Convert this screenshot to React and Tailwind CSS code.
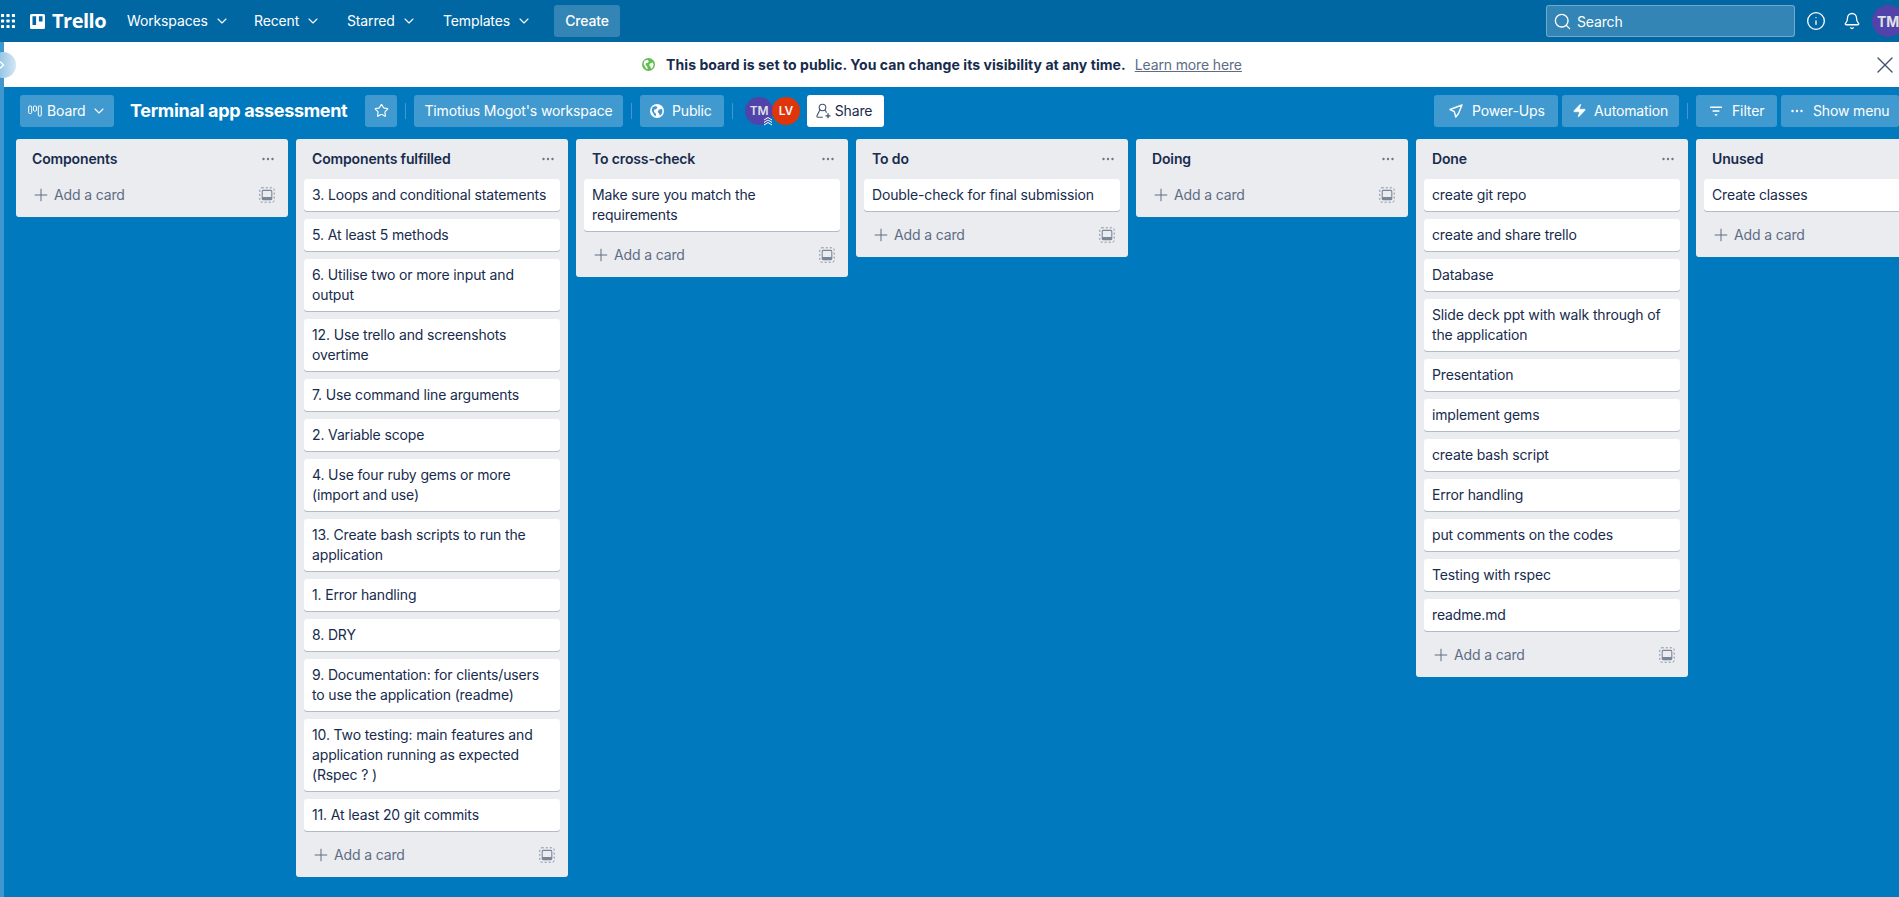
import React from "react";
import { ChevronDown, ChevronRight, Star, Search, Info, Bell, X, Plus, Zap } from "lucide-react";

const lists = [
  { t: "Components", c: [] },
  { t: "Components fulfilled", c: [
    "3. Loops and conditional statements", "5. At least 5 methods", "6. Utilise two or more input and output",
    "12. Use trello and screenshots overtime", "7. Use command line arguments", "2. Variable scope",
    "4. Use four ruby gems or more (import and use)", "13. Create bash scripts to run the application",
    "1. Error handling", "8. DRY", "9. Documentation: for clients/users to use the application (readme)",
    "10. Two testing: main features and application running as expected (Rspec ? )", "11. At least 20 git commits"] },
  { t: "To cross-check", c: ["Make sure you match the requirements"] },
  { t: "To do", c: ["Double-check for final submission"] },
  { t: "Doing", c: [] },
  { t: "Done", c: ["create git repo", "create and share trello", "Database", "Slide deck ppt with walk through of the application",
    "Presentation", "implement gems", "create bash script", "Error handling", "put comments on the codes", "Testing with rspec", "readme.md"] },
  { t: "Unused", c: ["Create classes"] },
];

const Grid = () => (
  <svg width="14" height="14" viewBox="0 0 14 14" fill="white">
    {[1.5, 7, 12.5].flatMap((y) => [1.5, 7, 12.5].map((x) => <rect key={x + "-" + y} x={x - 1.6} y={y - 1.6} width="3.2" height="3.2" rx="0.9" />))}
  </svg>
);
const Logo = () => (
  <svg width="15" height="15" viewBox="0 0 15 15">
    <path fillRule="evenodd" fill="white" d="M1.5 0h12A1.5 1.5 0 0 1 15 1.5v12a1.5 1.5 0 0 1-1.5 1.5h-12A1.5 1.5 0 0 1 0 13.5v-12A1.5 1.5 0 0 1 1.5 0zM2.5 2.2v8.8h3.6V2.2zM8.9 2.2v5.4h3.6V2.2z" />
  </svg>
);
const BoardIcon = () => (
  <svg width="14" height="12" viewBox="0 0 14 12" fill="none" stroke="white" strokeWidth="1">
    <rect x="0.7" y="1" width="3" height="7.5" rx="1" />
    <rect x="5.5" y="1" width="3" height="5" rx="1" />
    <rect x="10.3" y="1" width="3" height="10" rx="1" />
  </svg>
);
const GlobeFill = ({ size = 16, bg = "white", land = "#3e98cf" }) => (
  <svg width={size} height={size} viewBox="0 0 16 16">
    <circle cx="8" cy="8" r="8" fill={bg} />
    <path fill={land} d="M3 3.5 6.8 2.3 8.5 4 7 6 4.8 6.3 4.5 9 6.5 10.5 7 13.8 5 13 3.6 10.5 1.9 7.5zM10 6.5l3.3-1 1 2.5-1 3.5-2 2-1-3-1.5-1.5z" />
  </svg>
);
const TemplateIcon = () => (
  <svg width="16" height="16" viewBox="0 0 16 16" fill="none" stroke="#7a869a">
    <rect x="0.8" y="0.8" width="14.4" height="14.4" rx="2" strokeDasharray="2 2" strokeWidth="0.9" />
    <rect x="3.2" y="3.4" width="9.6" height="9.2" rx="1" strokeWidth="1.1" />
    <rect x="3.2" y="10" width="9.6" height="2.6" fill="#7a869a" strokeWidth="0" />
  </svg>
);
const Rocket = () => (
  <svg width="14" height="14" viewBox="0 0 14 14" fill="none" stroke="white" strokeWidth="1.4" strokeLinejoin="round">
    <path d="M13 1 1 5.5 5.3 7.6 6.8 13 9.5 9.5z" />
  </svg>
);
const FilterIcon = () => (
  <svg width="14" height="10" viewBox="0 0 14 10" fill="white">
    <rect x="1" y="0.5" width="12" height="1.5" rx="0.5" />
    <rect x="3.5" y="4.2" width="7" height="1.5" rx="0.5" />
    <rect x="5.8" y="8" width="2.5" height="1.5" rx="0.5" />
  </svg>
);
const ShareIcon = () => (
  <svg width="15" height="16" viewBox="0 0 15 16" fill="none" stroke="#42526e" strokeWidth="1.1">
    <circle cx="6.5" cy="4.5" r="3.3" />
    <path d="M3.7 7.2 1 12.8c-.3.8 0 1.4.8 1.4h5M9.3 7.3l1.2 2.4" />
    <path d="M9.5 12.8h5M12 10.300v5" strokeWidth="1.3" />
  </svg>
);
const Dots = ({ color = "#6b778c" }) => (
  <svg width="12" height="4" viewBox="0 0 12 4" fill={color}>
    <circle cx="1.5" cy="2" r="1.2" /><circle cx="6" cy="2" r="1.2" /><circle cx="10.5" cy="2" r="1.2" />
  </svg>
);

const NavItem = ({ label, className }) => (
  <div className={"flex items-center gap-[6px] text-white text-[14px] pb-px " + className}>
    <span>{label}</span>
    <ChevronDown size={16} strokeWidth={1.6} />
  </div>
);
const Btn = ({ children, className = "" }) => (
  <div className={"h-8 pb-px shrink-0 flex items-center rounded-[3px] bg-white/25 text-white text-[14px] " + className}>{children}</div>
);
const Divider = () => <div className="w-px h-4 bg-white/25 shrink-0" />;

const AddRow = () => (
  <div className="h-8 pb-px mb-[6px] mx-2 pl-[7px] pr-[5px] flex items-center text-[14px] text-[#5e6c84]">
    <Plus size={20} strokeWidth={1.2} className="mr-[3px]" />
    <span>Add a card</span>
    <span className="ml-auto flex"><TemplateIcon /></span>
  </div>
);

const List = ({ l }) => (
  <div className="w-[272px] shrink-0 self-start rounded-[3px] bg-[#ebecf0] text-[#172b4d]">
    <div className="h-10 pb-px pl-4 pr-[14px] flex items-center justify-between">
      <span className="text-[14px] font-semibold">{l.t}</span>
      <Dots />
    </div>
    {l.c.map((c) => (
      <div key={c} className="mx-2 mb-2 bg-white rounded-[3px] shadow-[0_1px_0_#091e4240] px-2 py-[6px] text-[14px] leading-5">{c}</div>
    ))}
    <AddRow />
  </div>
);

export default function App() {
  return (
    <div className="w-full h-[897px] overflow-hidden flex flex-col bg-[#0079bf] tracking-[-0.14px] font-['Inter',sans-serif]">
      <header className="h-[42px] shrink-0 bg-[#0067a3] flex items-center">
        <div className="ml-[1px] w-[29px] flex"><Grid /></div>
        <Logo />
        <span className="ml-[7px] text-white text-[20px] font-bold leading-none tracking-[-0.5px] font-['Open_Sans',sans-serif] w-[75px]">Trello</span>
        <NavItem label="Workspaces" className="w-[127px]" />
        <NavItem label="Recent" className="w-[93px]" />
        <NavItem label="Starred" className="w-[96px]" />
        <NavItem label="Templates" className="w-[111px]" />
        <div className="h-8 pb-px w-[66px] rounded-[3px] bg-white/20 text-white text-[14px] font-medium flex items-center justify-center">Create</div>
        <div className="ml-auto w-[249px] h-8 shrink-0 rounded-[3px] bg-white/20 border border-white/30 flex items-center text-white text-[14px] pl-[6px]">
          <Search size={19} strokeWidth={1.7} className="mr-[5px]" />
          <span>Search</span>
        </div>
        <div className="w-[30px] flex justify-center ml-[6px]"><Info size={20} strokeWidth={1.6} color="white" /></div>
        <div className="w-[41px] flex justify-center"><Bell size={18} strokeWidth={1.7} color="white" /></div>
        <div className="w-8 h-8 shrink-0 -mr-[5px] rounded-full bg-[#5243aa] text-[#dfe1e6] text-[14px] font-bold flex items-center justify-center">TM</div>
      </header>
      <div className="flex-1 min-h-0 flex relative">
        <div className="w-1 shrink-0 bg-[#3e98cf]" />
        <div className="absolute -left-[10px] top-[10px] w-[26px] h-[26px] rounded-full bg-gradient-to-r from-[#6fb3dc] to-[#d4e7f3] flex items-center justify-end pr-[8px] text-white">
          <ChevronRight size={12} strokeWidth={3} />
        </div>
        <main className="flex-1 min-w-0 flex flex-col">
          <div className="h-[45px] shrink-0 bg-white flex items-center text-[14px] text-[#172b4d]">
            <div className="flex-1 flex items-center justify-center pl-[9px]">
              <GlobeFill size={13} bg="#61bd4f" land="#ffffff" />
              <span className="ml-[11px] font-bold tracking-[0.06px]">This board is set to public. You can change its visibility at any time.</span>
              <span className="ml-[9px] text-[#5e6c84] underline">Learn more here</span>
            </div>
            <X size={28} strokeWidth={1.2} color="#42526e" />
          </div>
          <div className="h-[52px] shrink-0 pt-2 pl-4 flex items-start">
            <div className="flex items-center h-8 shrink-0">
              <Btn className="w-[94px] pl-2">
                <BoardIcon />
                <span className="ml-[5px]">Board</span>
                <ChevronDown size={16} strokeWidth={1.6} className="ml-[6px]" />
              </Btn>
              <span className="ml-4 pb-[2px] w-[235px] text-white text-[18px] font-bold whitespace-nowrap tracking-[-0.32px]">Terminal app assessment</span>
              <Btn className="w-8 justify-center"><Star size={15} strokeWidth={1.8} /></Btn>
              <div className="mx-2"><Divider /></div>
              <Btn className="w-[209px] justify-center whitespace-nowrap">Timotius Mogot's workspace</Btn>
              <div className="mx-2"><Divider /></div>
              <Btn className="w-[84px] pl-[10px]">
                <GlobeFill size={14} />
                <span className="ml-[8px]">Public</span>
              </Btn>
              <div className="mx-2"><Divider /></div>
              <div className="ml-[4px] flex relative">
                <div className="w-7 h-7 rounded-full bg-[#5243aa] text-[#dfe1e6] text-[12px] font-semibold flex items-center justify-center">TM</div>
                <svg className="absolute left-[18px] top-[19px]" width="10" height="10" viewBox="0 0 10 10" fill="none" stroke="white" strokeWidth="1">
                  <path d="M1 4 5 1.5 9 4M1 6.5 5 4 9 6.5M1 9 5 6.5 9 9" />
                </svg>
                <div className="w-7 h-7 -ml-[1px] rounded-full bg-[#de350b] text-[#f4f5f7] text-[12px] font-semibold flex items-center justify-center">LV</div>
              </div>
              <div className="ml-[7px] pb-px pr-[3px] w-[77px] h-8 bg-white rounded-[3px] flex items-center justify-center gap-[4px] text-[14px] text-[#172b4d]">
                <ShareIcon /><span>Share</span>
              </div>
            </div>
            <div className="ml-auto flex items-center h-8">
              <Btn className="w-[124px] pl-[15px]"><Rocket /><span className="ml-[9px]">Power-Ups</span></Btn>
              <Btn className="ml-1 w-[117px] pl-[10px]"><Zap size={15} fill="white" strokeWidth={1} /><span className="ml-[7px]">Automation</span></Btn>
              <div className="mx-2"><Divider /></div>
              <Btn className="w-[81px] pl-[13px]"><FilterIcon /><span className="ml-[9px]">Filter</span></Btn>
              <Btn className="ml-1 w-[118px] pl-[10px]"><Dots color="white" /><span className="ml-[10px]">Show menu</span></Btn>
            </div>
          </div>
          <div className="flex-1 min-h-0 pl-3 flex gap-2 overflow-hidden">
            {lists.map((l) => <List key={l.t} l={l} />)}
          </div>
        </main>
      </div>
    </div>
  );
}
